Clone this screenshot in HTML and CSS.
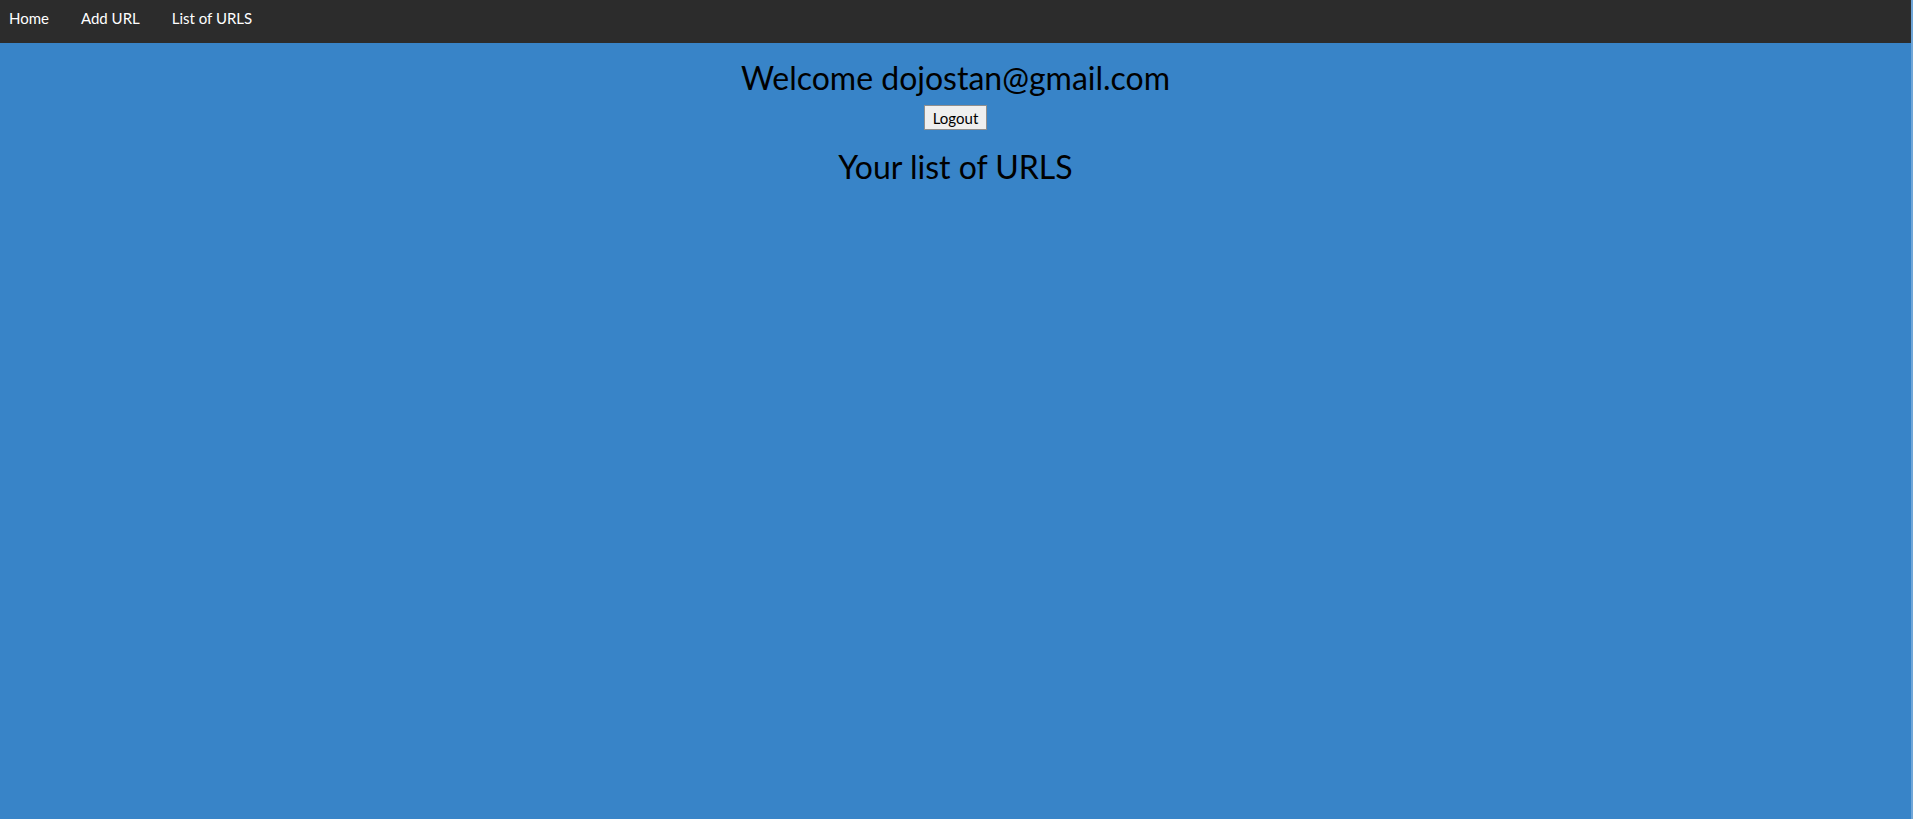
FILE: index.html
```html
<!DOCTYPE html>
<html>
<head>
<meta charset="utf-8">
<link rel="stylesheet" href="styles.css">
</head>
<body>
<nav class="nav">
  <a class="nav-link" href="#">Home</a>
  <a class="nav-link" href="#">Add URL</a>
  <a class="nav-link" href="#">List of URLS</a>
</nav>
<main class="main">
  <h1 class="title">Welcome dojostan@gmail.com</h1>
  <button class="logout">Logout</button>
  <h2 class="subtitle">Your list of URLS</h2>
</main>
</body>
</html>
```
FILE: styles.css
```css
html, body {
  margin: 0;
  padding: 0;
  height: 100%;
}
body {
  background: #3884c8;
  font-family: "Lato", "Open Sans", sans-serif;
  color: #000;
  border-right: 2px solid #6fa6d8;
  box-sizing: border-box;
}
.nav {
  background: #2c2c2c;
  height: 43px;
  box-sizing: border-box;
  display: flex;
  align-items: flex-start;
  padding: 9px 0 0 9px;
  gap: 32px;
}
.nav-link {
  color: #fff;
  text-decoration: none;
  font-size: 15px;
  line-height: 18px;
}
.main {
  display: flex;
  flex-direction: column;
  align-items: center;
}
.title {
  font-weight: 400;
  font-size: 32px;
  margin: 16px 0 8px;
  line-height: 1.2;
}
.logout {
  font-family: inherit;
  font-size: 15px;
  padding: 1px 8px;
  height: 25px;
  background: #efefef;
  border: 1px solid #8f8f8f;
  border-radius: 0;
  color: #000;
}
.subtitle {
  font-weight: 400;
  font-size: 32px;
  margin: 18px 0 0;
  line-height: 1.2;
}
```
